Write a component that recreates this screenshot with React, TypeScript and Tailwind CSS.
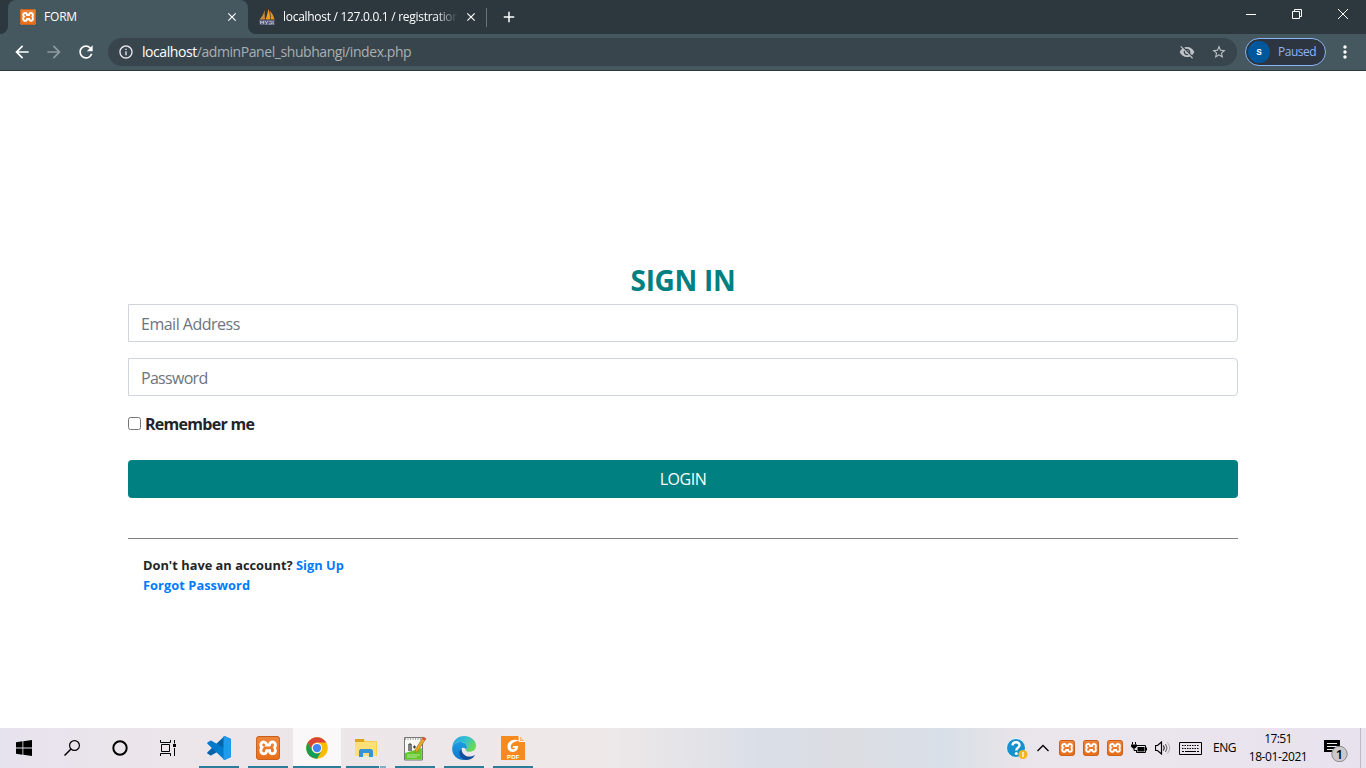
import type { ReactNode } from 'react';
import {
  MdArrowBack, MdArrowForward, MdRefresh, MdInfoOutline, MdVisibilityOff,
  MdStarBorder, MdMoreVert, MdClose, MdAdd,
} from 'react-icons/md';
import { SiXampp } from 'react-icons/si';

function Xampp({ size }: { size: number }) {
  return (
    <span className="relative inline-flex overflow-hidden rounded-[3px] bg-white">
      <SiXampp size={size} color="#ea701a" />
      <span className="absolute inset-0 rounded-[3px] border border-[#b9571a]/70 bg-gradient-to-b from-white/15 to-transparent" />
    </span>
  );
}

function Sails() {
  return (
    <svg width="18" height="18" viewBox="0 0 18 18">
      <path d="M6.5 2 7 11.500H1.500C4 8.500 6 5.500 6.500 2Z" fill="#c98a3a" />
      <path d="M10.500 1C9.500 5 9 8 7.500 11.500H12C12 7 11.700 4 10.500 1Z" fill="#f89c1c" />
      <path d="M12 3C14.500 5.500 15.800 8.500 16.500 11.500H12.600C12.800 8.500 12.600 6 12 3Z" fill="#e8941f" />
      <path d="M1 12h16l-1.500 5H2z" fill="#5d6180" />
      <path d="M2.500 16v-3l1.500 2 1.500-2v3M7 13l1.500 2L10 13M8.500 15v1.500M11.500 13.500h2M11 16h2.500v-1.500M15 13v3h1.500" stroke="#c3c6d6" strokeWidth=".8" fill="none" />
    </svg>
  );
}

function TabStrip() {
  return (
    <div className="flex h-[34px] bg-[#2c383e] pl-2 text-[12px] text-white">
      <div className="relative flex w-60 items-center rounded-t-lg bg-[#455860] pl-3">
        <svg className="absolute -left-2 bottom-0" width="8" height="8"><path d="M8 0A8 8 0 0 1 0 8H8Z" fill="#455860" /></svg>
        <svg className="absolute -right-2 bottom-0" width="8" height="8"><path d="M0 0A8 8 0 0 0 8 8H0Z" fill="#455860" /></svg>
        <Xampp size={16} />
        <span className="ml-2 flex-1 tracking-[-0.2px]">FORM</span>
        <MdClose size={14} className="mr-[9px]" />
      </div>
      <div className="flex w-[238px] items-center pl-[10px]">
        <Sails />
        <span className="ml-[7px] w-[175px] whitespace-nowrap tracking-[-0.29px] [mask-image:linear-gradient(to_right,black_87%,transparent)]">
          localhost / 127.0.0.1 / registration
        </span>
        <MdClose size={14} className="ml-[6px]" />
      </div>
      <div className="mt-2 h-[19px] w-px bg-[#65757c]" />
      <MdAdd size={18} className="ml-[13px] mt-2" />
      <div className="flex-1" />
      <svg width="138" height="28" viewBox="0 0 138 28" fill="none" stroke="white" className="shrink-0">
        <path d="M18 14.500h10M64.500 11.500h7v7h-7zM66.500 11.500v-2h7v7h-2M110 9l10 10M120 9l-10 10" />
      </svg>
    </div>
  );
}

function Toolbar() {
  return (
    <div className="flex h-[37px] items-center border-b border-[#2c383e] bg-[#455860] text-white">
      <MdArrowBack size={20} className="ml-3" />
      <MdArrowForward size={20} className="ml-3 text-[#8f9b9f]" />
      <MdRefresh size={20} className="ml-3" />
      <div className="ml-3 flex h-7 w-[1129px] items-center rounded-full bg-[#38454c] pl-[10px] pr-[10px]">
        <MdInfoOutline size={16} className="text-[#e8eaed]" />
        <span className="ml-2 flex-1 pb-px text-[14px] tracking-[-0.43px] text-[#a9b0b3]"><span className="text-white">localhost</span>/adminPanel_shubhangi/index.php</span>
        <MdVisibilityOff size={16} className="text-[#bfc4c6]" />
        <MdStarBorder size={16} className="ml-4 text-[#bfc4c6]" />
      </div>
      <div className="ml-2 flex h-7 w-[81px] items-center rounded-full border border-[#8ab4f8] bg-[#2d3640] pl-[2px]">
        <span className="flex size-[22px] items-center justify-center rounded-full bg-[#01579b] font-['Roboto',sans-serif] text-[11px] font-medium">s</span>
        <span className="ml-2 text-[12px] tracking-[-0.5px] text-[#8ab4f8]">Paused</span>
      </div>
      <MdMoreVert size={20} className="ml-[9px]" />
    </div>
  );
}

function SignIn() {
  return (
    <main className="h-[657px] bg-white px-32 pt-[192px] text-[16px] leading-6 text-[#212529]">
      <h3 className="h-[41px] text-center text-[28px] font-bold leading-[34px] tracking-[-0.3px] text-[#008080]">SIGN IN</h3>
      <input placeholder="Email Address" className="block h-[38px] w-full rounded-r border border-[#ced4da] px-3 pt-px tracking-[-0.5px] placeholder:text-[#6c757d]" />
      <input type="password" placeholder="Password" className="mt-4 block h-[38px] w-full rounded-r border border-[#ced4da] px-3 pt-px tracking-[-0.7px] placeholder:text-[#6c757d]" />
      <label className="mt-4 flex h-6 items-center font-bold tracking-[-0.71px]">
        <input type="checkbox" className="mb-[2px] mr-1 size-[13px]" />
        <span>Remember me</span>
      </label>
      <button className="mt-6 block h-[38px] w-full rounded bg-[#008080] tracking-[-0.5px] text-white">LOGIN</button>
      <hr className="mt-10 border-t border-[#808080]" />
      <div className="ml-[15px] mt-4 text-[12.8px] font-bold leading-5 tracking-[0.02px]">
        <p>Don&apos;t have an account? <a className="text-[#007bff]">Sign Up</a></p>
        <p><a className="tracking-[0.07px] text-[#007bff]">Forgot Password</a></p>
      </div>
    </main>
  );
}

function TaskItem({ children, active, stacked }: { children: ReactNode; active?: boolean; stacked?: boolean }) {
  return (
    <div className={active ? 'flex h-10 w-12 flex-col items-center bg-white/70' : 'flex h-10 w-12 flex-col items-center'}>
      <div className="flex h-[38px] items-center pt-[2px]">{children}</div>
      <div className={active ? 'flex h-[2px] w-12 bg-[#2c7d99]' : 'flex h-[2px] w-10 justify-end bg-[#2c7d99]'}>
        {stacked && <span className="h-[2px] w-[7px] border-l border-[#e8e3ea] bg-[#7fb0c4]" />}
      </div>
    </div>
  );
}

function VsCode() {
  return (
    <svg width="24" height="24" viewBox="0 0 24 24">
      <path d="M17.500 0 24 3v5L4.500 19.200a1 1 0 0 1-1.200 0L.7 17.700a1 1 0 0 1 0-1.600Z" fill="#0065a9" />
      <path d="M17.500 24 24 21v-5L4.500 4.800a1 1 0 0 0-1.200 0L.7 6.300a1 1 0 0 0 0 1.600Z" fill="#007acc" />
      <path d="M17.500 0 24 3v18l-6.500 3c-.7.2-1 0-1-.8V.8c0-.6.300-1 1-.8Z" fill="#1f9cf0" />
    </svg>
  );
}

function Chrome() {
  return (
    <svg width="22" height="22" viewBox="0 0 48 48">
      <circle cx="24" cy="24" r="23.500" fill="#fbbc05" />
      <path d="M3.650 12.250A23.500 23.500 0 0 1 44.350 12.250H24A11.750 11.750 0 0 0 13.800 30Z" fill="#dc4437" />
      <path d="M3.650 12.250A23.500 23.500 0 0 0 24 47.500L34.200 29.900A11.750 11.750 0 0 1 13.800 29.900Z" fill="#179b58" />
      <circle cx="24" cy="24" r="11.500" fill="#f4f5f7" />
      <circle cx="24" cy="24" r="9" fill="#4385f5" />
    </svg>
  );
}

function Explorer() {
  return (
    <svg width="22" height="20" viewBox="0 0 22 20">
      <path d="M0 1h9l1.500 2H22v15H0Z" fill="#f9cf52" />
      <path d="M0 1h9v3H0Z" fill="#dba61b" />
      <path d="M0 4h21v14H0Z" fill="#ffdf76" />
      <path d="M4 19v-6.500L5.500 11h11l1.500 1.500V19h-4v-4H8v4Z" fill="#3593d6" />
    </svg>
  );
}

function NotePad() {
  return (
    <svg width="24" height="25" viewBox="0 0 24 25">
      <path d="M1.500 1.500h18V24h-18Z" fill="#f8f8f4" stroke="#777" />
      <path d="M2 3h17" stroke="#555" strokeDasharray="1 1.500" />
      <path d="M2 17 18.800 12v11.500H2Z" fill="#62c829" />
      <path d="M4 19h13M4 21h10" stroke="#dff5cc" strokeWidth=".7" />
      <path d="M6 8v7M8 8v7M6 8h2M10 11h3M14 11h3M11.500 9.500v3M15.500 9.500v3" stroke="#333" strokeWidth="1.200" />
      <path d="m20 1 3 1.500L15 15l-3 2 .5-3.500Z" fill="#e9a928" stroke="#9d6d1d" strokeWidth=".6" />
      <path d="m20 1 3 1.500-1 2L18.800 3Z" fill="#dd4d42" />
    </svg>
  );
}

function Edge() {
  return (
    <svg width="24" height="24" viewBox="0 0 24 24">
      <defs>
        <linearGradient id="edgeTop" x1="0" y1="0" x2="1" y2=".5"><stop stopColor="#249fe0" /><stop offset=".55" stopColor="#35c1d0" /><stop offset="1" stopColor="#69d957" /></linearGradient>
        <linearGradient id="edgeSide" x1="0" y1="0" x2="0" y2="1"><stop stopColor="#1b9de2" /><stop offset="1" stopColor="#1276ca" /></linearGradient>
      </defs>
      <path d="M.3 11C1 4 6 0 12 0c7 0 12 4.500 12 9.800 0 3.800-3 6-6.300 6-2.500 0-4-1-4-1.900 0-.8 1.200-1 1.200-3 0-2.500-2.500-5-6.500-5C4 5.900 1 8.300.3 11Z" fill="url(#edgeTop)" />
      <path d="M.2 12C.5 8 4 5.900 8.400 5.900c4 0 6.500 2.500 6.500 5 0 1.400-.7 2-1 2.500-.8-1.500-2.500-2.200-4.100-1.200C7 14 7.500 20 14.500 23.700 7 25.300-.5 20 .2 12Z" fill="url(#edgeSide)" />
      <path d="M9.800 12.200c-1 4.500 3 8.300 7.500 8.300 2.300 0 3.700-.6 4.900-1.300.5-.2.700.1.400.5-2 3-5 4.300-8.100 4.300-7-1-9.500-8-4.700-11.800Z" fill="#134f9b" />
    </svg>
  );
}

function Foxit() {
  return (
    <svg width="24" height="24" viewBox="0 0 24 24">
      <path d="M0 0h17.500v6H24v18H0Z" fill="#f58a1f" />
      <path d="M18.500 0v5.500H24ZM19.800 2.500v1.700h1.700" fill="#f58a1f" stroke="#fff" strokeWidth=".8" />
      <path d="M18 4.500C13 2.500 7 4.500 6.500 10c-.3 5 4 7 7.500 5.500 2.500-1 3.200-3.500 3.200-5.500h-5l-.7 1.700h2.600c-.6 2.300-4.300 2.300-4.300-.9C9.800 7.500 13.500 5.500 18 4.500Z" fill="#fff" />
      <text x="12.300" y="22.500" textAnchor="middle" fontSize="6" fontWeight="700" fill="#fff" letterSpacing=".2" fontFamily="Liberation Sans, sans-serif">PDF</text>
    </svg>
  );
}

function Help() {
  return (
    <svg width="22" height="22" viewBox="0 0 22 22">
      <circle cx="10" cy="10" r="9.500" fill="#1592cf" stroke="#eef7fb" />
      <path d="M6.500 7.300C7 3 13.800 3.500 13.500 7.500c-.2 2.200-3.200 2.300-3.200 5" fill="none" stroke="#fff" strokeWidth="2.400" />
      <circle cx="10.300" cy="15.600" r="1.500" fill="#fff" />
      <circle cx="17" cy="16.500" r="4.600" fill="#f5b51e" />
      <path d="M17 14v5" stroke="#fff" strokeWidth="1.300" />
    </svg>
  );
}

function Taskbar() {
  return (
    <footer className="flex h-10 items-center bg-[linear-gradient(90deg,#e7e3ee_0%,#ece5e9_14%,#eee8e9_44%,#e3e3e7_51%,#d9dee7_56%,#dbdde2_62%,#d9dfe8_69%,#e0e2e7_72%,#eae4eb_75%,#ebe5ed_82%,#e7e2ed_100%)] text-[12px] text-black">
      <div className="flex w-12 justify-center">
        <svg width="16" height="16" viewBox="0 0 16 16"><path d="M0 2.200 6.500 1.300V7.500H0ZM7.300 1.200 16 0v7.500H7.300ZM0 8.400h6.500v6.300L0 13.800ZM7.300 8.400H16V16l-8.700-1.200Z" /></svg>
      </div>
      <div className="flex w-12 justify-center">
        <svg width="16" height="16" viewBox="0 0 16 16" fill="none" stroke="black" strokeWidth="1.200"><circle cx="10.500" cy="5.500" r="4.900" /><path d="M7 9 .5 15.500" strokeWidth="1.500" /></svg>
      </div>
      <div className="flex w-12 justify-center">
        <svg width="16" height="16" viewBox="0 0 16 16"><circle cx="8" cy="8" r="6.700" fill="none" stroke="black" strokeWidth="2" /></svg>
      </div>
      <div className="flex w-12 justify-center">
        <svg width="16" height="16" viewBox="0 0 16 16" fill="none" stroke="black"><path d="M.5 0v2.500h10V0M1.500 4.500h8v7h-8zM.5 16v-2.500h10V16M14.500 0v3.500M14.500 8v8" /><path d="M13 4h3v3h-3z" fill="black" stroke="none" /></svg>
      </div>
      <div className="ml-[3px] flex gap-px">
        <TaskItem><VsCode /></TaskItem>
        <TaskItem><Xampp size={24} /></TaskItem>
        <TaskItem active><Chrome /></TaskItem>
        <TaskItem stacked><Explorer /></TaskItem>
        <TaskItem><NotePad /></TaskItem>
        <TaskItem><Edge /></TaskItem>
        <TaskItem><Foxit /></TaskItem>
      </div>
      <div className="flex-1" />
      <div className="flex w-[360px] shrink-0 items-center">
        <div className="w-[25px] shrink-0 pt-[2px]"><Help /></div>
        <div className="flex w-6 justify-center">
          <svg width="12" height="8" viewBox="0 0 12 8" fill="none" stroke="black" strokeWidth="1.300"><path d="m.5 7 5.500-5.500L11.500 7" /></svg>
        </div>
        <div className="flex w-6 justify-center"><Xampp size={16} /></div>
        <div className="flex w-6 justify-center"><Xampp size={16} /></div>
        <div className="flex w-6 justify-center"><Xampp size={16} /></div>
        <div className="flex w-6 justify-center">
          <svg width="16" height="13" viewBox="0 0 16 13" fill="none" stroke="black"><path d="M5.500 3.500h9v7h-9V8M1.500 0v2.500M4.500 0v2.500M3 5v3.500h2.500" /><path d="M0 2.500h6v2L4 6.500H2l-2-2ZM6.500 5h7v4.500h-7ZM15 5.500h1v3h-1Z" fill="black" stroke="none" /></svg>
        </div>
        <div className="flex w-6 justify-center">
          <svg width="16" height="14" viewBox="0 0 16 14" fill="none" stroke="black"><path d="M.5 4.500h2L6.500 1v12l-4-3.500h-2Z" strokeWidth="1.200" /><path d="M8.500 4.500q1.500 2.500 0 5" /><path d="M10.500 3q3 4 0 8" stroke="#555" /><path d="M12.500 1.500q4.500 5.500 0 11" stroke="#aaa" /></svg>
        </div>
        <svg className="ml-1 shrink-0" width="23" height="13" viewBox="0 0 23 13" fill="none" stroke="black"><path d="M.5.5h22v12H.5Z" /><path d="M3 3.500h17M3 6.500h17" strokeDasharray="1.500 1" /><path d="M3 9.500h2M6 9.500h11M18 9.500h2" /></svg>
        <span className="ml-[11px] w-[24px] tracking-[-0.5px]">ENG</span>
        <div className="ml-[7px] w-[68px] shrink-0 text-center leading-[18px]">
          <div className="tracking-[-0.6px]">17:51</div>
          <div className="tracking-[-0.4px]">18-01-2021</div>
        </div>
        <div className="ml-[12px] h-5 w-6 shrink-0">
          <svg width="24" height="24" viewBox="0 0 24 24"><path d="M0 2h16v12h-5l-3 3v-3H0Z" /><path d="M3 5.500h10M3 8.500h10M3 11.500h7" stroke="#eee" /><circle cx="15.500" cy="16" r="7.700" fill="#ccc9cd" stroke="#8c8a8e" /><text x="15.500" y="20.500" textAnchor="middle" fontSize="13" fontWeight="600" fontFamily="Open Sans, sans-serif">1</text></svg>
        </div>
        <div className="ml-[12px] h-10 w-px shrink-0 bg-[#bdb9c2]" />
      </div>
    </footer>
  );
}

export default function App() {
  return (
    <div className="h-[768px] w-[1366px] overflow-hidden bg-white font-['Open_Sans',sans-serif]">
      <TabStrip />
      <Toolbar />
      <SignIn />
      <Taskbar />
    </div>
  );
}
